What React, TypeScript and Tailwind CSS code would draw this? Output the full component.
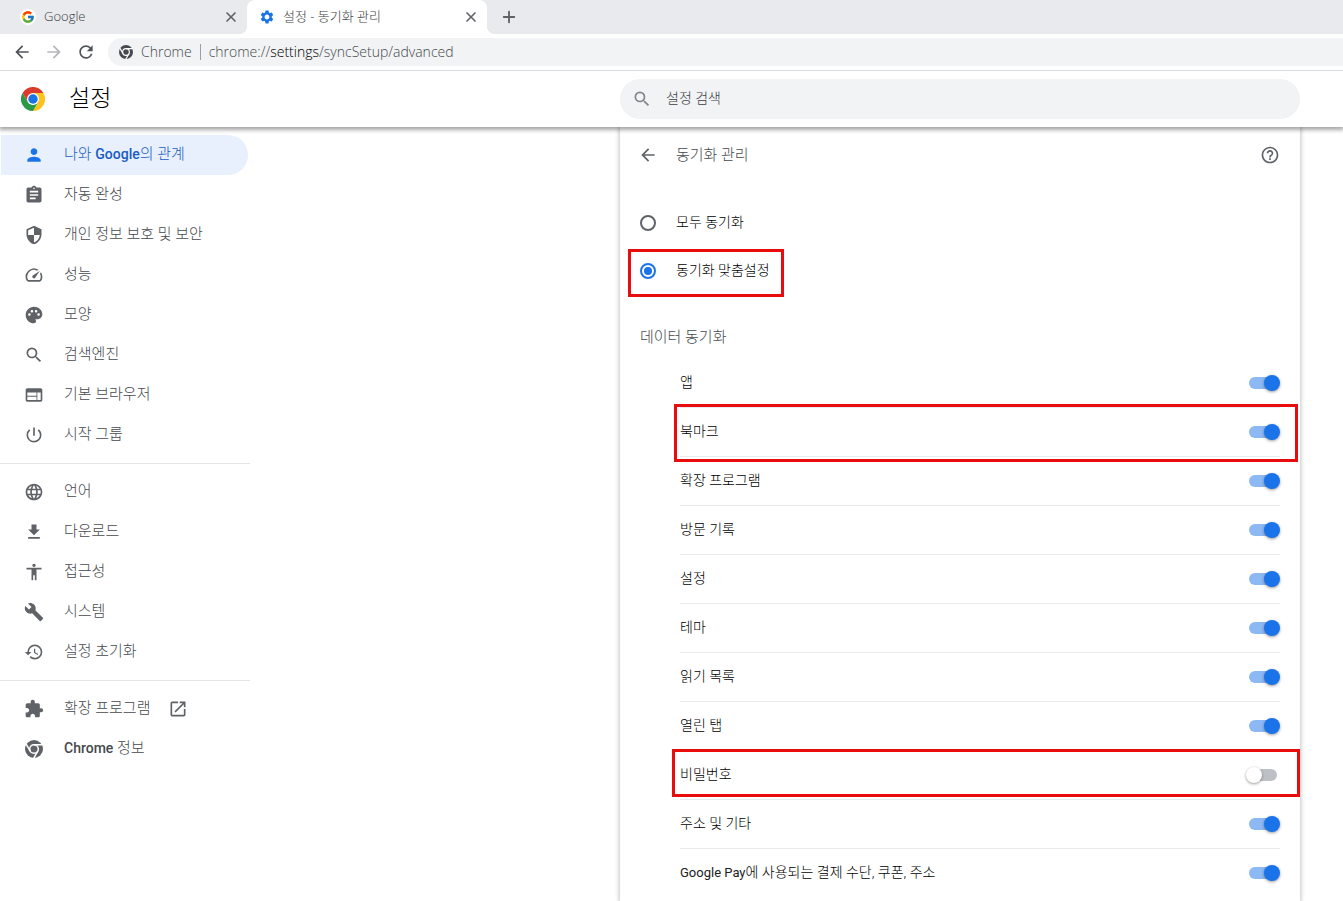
import { clsx } from "clsx"
import { Plus, X } from "lucide-react"
import { type ReactNode, useState } from "react"
import type { IconType } from "react-icons"
import { FcGoogle } from "react-icons/fc"
import {
  MdAccessibility,
  MdArrowBack,
  MdArrowForward,
  MdAssignment,
  MdBuild,
  MdExtension,
  MdFileDownload,
  MdHelpOutline,
  MdLanguage,
  MdOpenInNew,
  MdPalette,
  MdPerson,
  MdPowerSettingsNew,
  MdRefresh,
  MdRestore,
  MdSearch,
  MdSecurity,
  MdSettings,
  MdSpeed,
  MdWeb,
} from "react-icons/md"

interface NavItem {
  id: string
  label: ReactNode
  icon: IconType
  external?: boolean
}

const NAV_GROUPS: NavItem[][] = [
  [
    {
      id: "people",
      label: (
        <>
          나와 <Latin>Google</Latin>의 관계
        </>
      ),
      icon: MdPerson,
    },
    { id: "autofill", label: "자동 완성", icon: MdAssignment },
    { id: "privacy", label: "개인 정보 보호 및 보안", icon: MdSecurity },
    { id: "performance", label: "성능", icon: MdSpeed },
    { id: "appearance", label: "모양", icon: MdPalette },
    { id: "search", label: "검색엔진", icon: MdSearch },
    { id: "defaultBrowser", label: "기본 브라우저", icon: MdWeb },
    { id: "onStartup", label: "시작 그룹", icon: MdPowerSettingsNew },
  ],
  [
    { id: "languages", label: "언어", icon: MdLanguage },
    { id: "downloads", label: "다운로드", icon: MdFileDownload },
    { id: "accessibility", label: "접근성", icon: MdAccessibility },
    { id: "system", label: "시스템", icon: MdBuild },
    { id: "reset", label: "설정 초기화", icon: MdRestore },
  ],
  [
    {
      id: "extensions",
      label: "확장 프로그램",
      icon: MdExtension,
      external: true,
    },
    {
      id: "help",
      label: (
        <>
          <Latin>Chrome</Latin> 정보
        </>
      ),
      icon: ChromeGlyph,
    },
  ],
]

interface SyncType {
  id: string
  label: ReactNode
  enabled: boolean
  // position of the red marker relative to the row
  marker?: string
}

const SYNC_TYPES: SyncType[] = [
  { id: "apps", label: "앱", enabled: true },
  {
    id: "bookmarks",
    label: "북마크",
    enabled: true,
    marker: "-top-1 -bottom-1.5 -left-1.5 -right-[18px]",
  },
  { id: "extensions", label: "확장 프로그램", enabled: true },
  { id: "history", label: "방문 기록", enabled: true },
  { id: "settings", label: "설정", enabled: true },
  { id: "themes", label: "테마", enabled: true },
  { id: "readingList", label: "읽기 목록", enabled: true },
  { id: "tabs", label: "열린 탭", enabled: true },
  {
    id: "passwords",
    label: "비밀번호",
    enabled: false,
    marker: "-top-0.5 bottom-0.5 -left-2 -right-5",
  },
  { id: "autofill", label: "주소 및 기타", enabled: true },
  {
    id: "payments",
    label: (
      <>
        <span className="text-[13px] font-normal text-[#202124]">
          Google Pay
        </span>
        에 사용되는 결제 수단, 쿠폰, 주소
      </>
    ),
    enabled: true,
  },
]

function Latin({ children }: { children: ReactNode }) {
  return <span className="text-sm font-medium">{children}</span>
}

function ChromeGlyph({ className }: { className?: string }) {
  return (
    <svg viewBox="0 0 48 48" className={className} aria-hidden="true">
      <circle cx="24" cy="24" r="24" fill="currentColor" />
      <circle cx="24" cy="24" r="11.5" fill="none" stroke="#fff" strokeWidth="4" />
      <path
        d="M24 12.5H46M34 29.8 23 48.8M14 29.8 3 10.8"
        fill="none"
        stroke="#fff"
        strokeWidth="4"
      />
    </svg>
  )
}

function ChromeLogo() {
  return (
    <svg viewBox="0 0 48 48" className="size-6" aria-hidden="true">
      <path d="M24 12H44.8A24 24 0 0 1 24 48L34.4 30Z" fill="#fcc31e" />
      <path d="M24 48A24 24 0 0 1 3.2 12L13.6 30 24 36 34.4 30Z" fill="#2a9a47" />
      <path d="M3.2 12A24 24 0 0 1 44.8 12H24L13.6 30Z" fill="#db3a2e" />
      <circle cx="24" cy="24" r="12" fill="#fff" />
      <circle cx="24" cy="24" r="9.5" fill="#1a73e8" />
    </svg>
  )
}

function Marker({ className }: { className?: string }) {
  return (
    <span
      className={clsx(
        "pointer-events-none absolute z-10 border-3 border-[#e80c0c]",
        className,
      )}
    />
  )
}

interface TabProps {
  title: string
  icon: ReactNode
  active?: boolean
}

function Tab({ title, icon, active }: TabProps) {
  return (
    <div
      className={clsx(
        "relative flex h-full items-center pr-2 pl-3",
        active
          ? "w-60 rounded-t-lg bg-white before:absolute before:bottom-0 before:-left-2 before:size-2 before:bg-[radial-gradient(circle_at_0_0,transparent_8px,white_8px)] after:absolute after:-right-2 after:bottom-0 after:size-2 after:bg-[radial-gradient(circle_at_100%_0,transparent_8px,white_8px)]"
          : "w-[239px]",
      )}
    >
      {icon}
      <button
        type="button"
        className="ml-2 min-w-0 flex-1 truncate text-left text-[13px] text-[#3c4043]"
      >
        {title}
      </button>
      <button
        type="button"
        aria-label={`${title} 닫기`}
        className="flex size-4 items-center justify-center text-[#5f6368]"
      >
        <X className="size-4" strokeWidth={2.5} />
      </button>
    </div>
  )
}

function BrowserChrome() {
  return (
    <div className="relative z-30 font-['Open_Sans','Noto_Sans_CJK_KR',sans-serif]">
      <div className="flex h-[34px] items-center bg-[#e8eaed] pl-2">
        <Tab
          title="Google"
          icon={
            <span className="flex size-4 items-center justify-center rounded-full bg-white">
              <FcGoogle className="size-3.5" />
            </span>
          }
        />
        <Tab
          title="설정 - 동기화 관리"
          active
          icon={<MdSettings className="size-4 text-[#1a73e8]" />}
        />
        <button
          type="button"
          aria-label="새 탭"
          className="ml-3 flex size-5 items-center justify-center text-[#5f6368]"
        >
          <Plus className="size-[18px]" strokeWidth={2.5} />
        </button>
      </div>

      <div className="flex h-[37px] items-center border-b border-[#dadce0] bg-white pl-3">
        <div className="flex gap-3 text-[#50545a]">
          <button type="button" aria-label="뒤로">
            <MdArrowBack className="size-5" />
          </button>
          <button type="button" aria-label="앞으로" disabled>
            <MdArrowForward className="size-5 text-[#b4b6b9]" />
          </button>
          <button type="button" aria-label="새로고침">
            <MdRefresh className="size-5" />
          </button>
        </div>
        <div className="ml-3 flex h-7 flex-1 items-center rounded-l-full bg-[#f1f3f4] pl-[11px] text-sm text-[#46494d]">
          <ChromeGlyph className="size-3.5" />
          <span className="ml-2">Chrome</span>
          <span className="mx-2 h-4 w-px bg-[#9aa0a6]" />
          <span>
            chrome://<span className="text-black">settings</span>
            /syncSetup/advanced
          </span>
        </div>
      </div>
    </div>
  )
}

function Header() {
  return (
    <header className="relative z-20 flex h-14 items-center bg-white shadow-[0_2px_4px_1px_rgba(0,0,0,0.35)]">
      <div className="flex w-[620px] shrink-0 items-center gap-6 pl-[21px]">
        <ChromeLogo />
        <h1 className="text-[23px] leading-8 text-black">설정</h1>
      </div>
      <label className="flex h-10 max-w-[680px] flex-1 items-center gap-3.5 rounded-full bg-[#f1f3f4] pl-3">
        <MdSearch className="size-5 text-[#80868b]" />
        <input
          type="search"
          aria-label="설정 검색"
          placeholder="설정 검색"
          className="flex-1 bg-transparent pb-0.5 text-sm outline-none placeholder:text-[#3c4043]"
        />
      </label>
    </header>
  )
}

function Sidebar() {
  const [selected, setSelected] = useState("people")

  return (
    <nav className="w-[250px] pt-2">
      {NAV_GROUPS.map((group, index) => (
        <ul
          key={group[0].id}
          className={clsx(index > 0 && "mt-2 border-t border-[#e4e5e7] pt-2")}
        >
          {group.map(({ id, label, icon: Icon, external }) => (
            <li key={id} className="pr-0.5 pl-px">
              <a
                href={`#${id}`}
                onClick={() => setSelected(id)}
                className={clsx(
                  "flex h-10 items-center rounded-r-full pl-[23px] text-[15px]",
                  selected === id
                    ? "bg-[#e8f0fe] text-[#1a5cc4]"
                    : "text-[#46494d]",
                )}
              >
                <span className="flex size-5 items-center justify-center">
                  <Icon
                    className={clsx(
                      Icon === ChromeGlyph ? "size-[18px]" : "size-5",
                      selected === id ? "text-[#1a73e8]" : "text-[#5f6368]",
                    )}
                  />
                </span>
                <span className="ml-5 pb-0.5">{label}</span>
                {external && (
                  <MdOpenInNew className="ml-[18px] size-5 text-[#5f6368]" />
                )}
              </a>
            </li>
          ))}
        </ul>
      ))}
    </nav>
  )
}

interface SyncRadioProps {
  label: string
  checked: boolean
  onChange: () => void
  children?: ReactNode
}

function SyncRadio({ label, checked, onChange, children }: SyncRadioProps) {
  return (
    <label className="relative flex h-12 w-fit items-center gap-5 text-sm text-black">
      <input
        type="radio"
        name="sync-mode"
        checked={checked}
        onChange={onChange}
        className="flex size-4 appearance-none items-center justify-center rounded-full border-2 border-[#5f6368] checked:border-[#1a73e8] checked:before:size-2 checked:before:rounded-full checked:before:bg-[#1a73e8]"
      />
      <span className="pb-0.5">{label}</span>
      {children}
    </label>
  )
}

function SyncToggle({ item }: { item: SyncType }) {
  const [enabled, setEnabled] = useState(item.enabled)

  return (
    <label className="relative flex h-[49px] items-center justify-between border-b border-[#e8eaed] text-sm text-black last:border-transparent">
      <span className="pb-0.5">{item.label}</span>
      <input
        type="checkbox"
        role="switch"
        checked={enabled}
        onChange={() => setEnabled((current) => !current)}
        className="relative h-4 w-[34px] appearance-none before:absolute before:inset-x-[3px] before:inset-y-0.5 before:rounded-full before:bg-[#bdc1c6] after:absolute after:left-0 after:size-4 after:rounded-full after:bg-white after:shadow-[0_1px_3px_rgba(0,0,0,0.4)] checked:before:bg-[#8cb8f3] checked:after:left-[18px] checked:after:bg-[#1a73e8]"
      />
      {item.marker && <Marker className={item.marker} />}
    </label>
  )
}

function SyncPage() {
  const [mode, setMode] = useState<"all" | "custom">("custom")

  return (
    <main className="max-w-[680px] flex-1 bg-white px-5 shadow-[0_0_4px_1px_rgba(60,64,67,0.3)]">
      <div className="flex h-14 items-center text-[#5f6368]">
        <button type="button" aria-label="뒤로" className="-ml-0.5">
          <MdArrowBack className="size-5" />
        </button>
        <h2 className="ml-[18px] flex-1 text-[15px] text-[#46494d]">
          동기화 관리
        </h2>
        <button type="button" aria-label="도움말">
          <MdHelpOutline className="size-5" />
        </button>
      </div>

      <div className="pt-4">
        <SyncRadio
          label="모두 동기화"
          checked={mode === "all"}
          onChange={() => setMode("all")}
        />
        <SyncRadio
          label="동기화 맞춤설정"
          checked={mode === "custom"}
          onChange={() => setMode("custom")}
        >
          <Marker className="top-0.5 -right-3.5 -bottom-0.5 -left-3" />
        </SyncRadio>
      </div>

      <h3 className="pt-8 pb-3 text-[15px] leading-5 text-[#46494d]">
        데이터 동기화
      </h3>
      <div className="pl-10">
        {SYNC_TYPES.map((item) => (
          <SyncToggle key={item.id} item={item} />
        ))}
      </div>
    </main>
  )
}

export default function App() {
  return (
    <div
      lang="ko"
      className="flex min-h-screen flex-col overflow-x-hidden bg-white font-[Roboto,'Noto_Sans_CJK_KR',sans-serif] font-light"
    >
      <BrowserChrome />
      <Header />
      <div className="flex flex-1">
        <div className="w-[620px] shrink-0">
          <Sidebar />
        </div>
        <SyncPage />
      </div>
    </div>
  )
}
